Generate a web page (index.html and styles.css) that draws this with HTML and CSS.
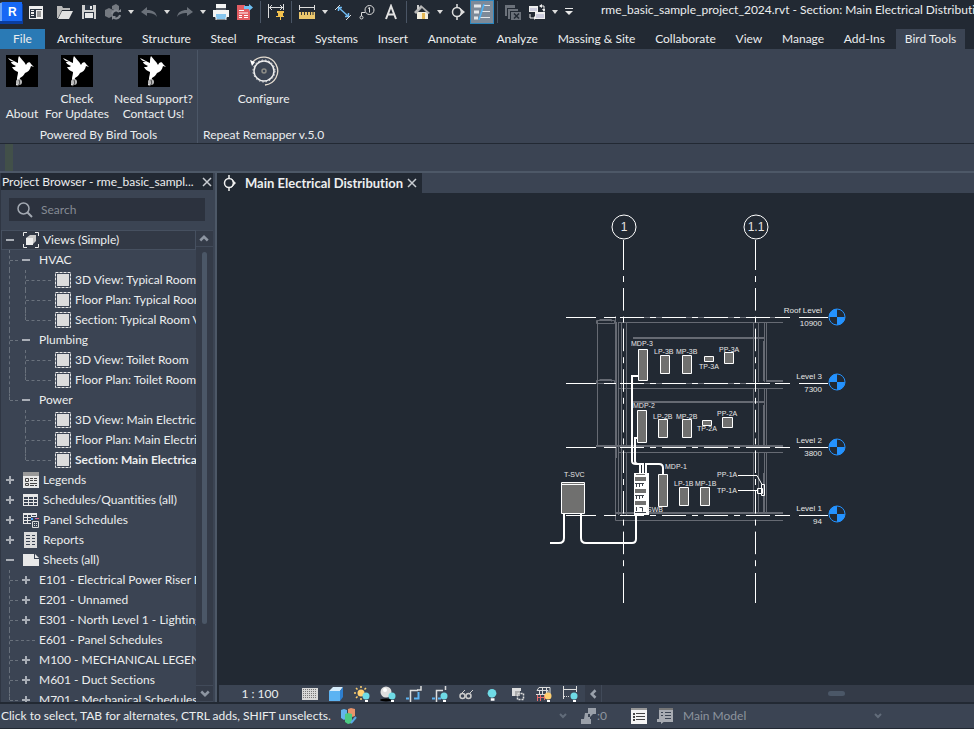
FILE: index.html
```html
<!DOCTYPE html>
<html lang="en">
<head>
<meta charset="utf-8">
<title>rme_basic_sample_project_2024.rvt - Section: Main Electrical Distribution</title>
<link rel="stylesheet" href="styles.css">
</head>
<body>
<svg class="defs" aria-hidden="true">
  <symbol id="caret" viewBox="0 0 6 4"><path d="M0 0h6L3 4z" fill="#dcdcdc"/></symbol>
  <symbol id="chev" viewBox="0 0 8 8"><path d="M1 2l3 3 3-3" fill="none" stroke="currentColor" stroke-width="2"/></symbol>
  <symbol id="bird" viewBox="0 0 32 32">
    <path d="M0 0h32v32H0z" fill="#000"/>
    <path d="M2 3c4 2 6 3 10 5 0-3 0-5 1-7 2 3 5 5 7 9 1-3 4-4 5-1l3 3-3-1c-1 4-3 6-6 7-1 2-3 4-5 5l-2 8-2-1 1-5c0-4 1-5 1-8-3-1-5-3-6-5 2 0 3 0 4-1-3-1-5-3-5-4l3 0C5 6 3 5 2 3z" fill="#fff"/>
    <circle cx="13" cy="27" r="3" fill="#bbb"/><path d="M11 31c3-1 3-3 2-6" stroke="#444" fill="none"/>
  </symbol>
  <symbol id="view" viewBox="0 0 16 16"><path d="M.5.5h15v15H.5z" fill="none" stroke="#e8e8e8" stroke-dasharray="3 1"/><path d="M2 2h12v12H2z" fill="#3b4453"/><path d="M2 2h12v12H2z" fill="#dcdcdc"/></symbol>
  <symbol id="minus" viewBox="0 0 8 8"><path d="M0 3h8v2H0z" fill="#a9aeb6"/></symbol>
  <symbol id="plus" viewBox="0 0 8 8"><path d="M0 3h8v2H0zM3 0h2v8H3z" fill="#a9aeb6"/></symbol>
  <symbol id="bulb" viewBox="0 0 8 10"><circle cx="4" cy="4" r="3.5"/><path d="M3 8h3v2H3z" fill="#fff"/></symbol>
  <symbol id="level" viewBox="-9 -9 18 18"><path d="M0 0v-8A8 8 0 0 0-8 0zM0 0v8A8 8 0 0 0 8 0z" fill="#2492ff"/><circle r="8" fill="none" stroke="#2492ff"/></symbol>
</svg>

<header class="titlebar">
  <div class="qat">
    <button class="qb logo" aria-label="Revit"><svg viewBox="0 0 24 24" width="24" height="24"><path d="M0 4h23v20H0z" fill="#0a3ea0"/><path d="M0 3l3-1v19H0z" fill="#6ca4f5"/><path d="M2 2h20v19H2z" fill="#1768f5"/><text x="8" y="16" class="logo-r">R</text></svg></button>
    <button class="qb" aria-label="Properties"><svg viewBox="0 0 16 16"><path d="M1 2h14v13H1z" fill="#eee"/><path d="M2 5h12v9H2z" fill="#2c3542"/><path d="M3 6h3v1H3zM3 8h3v2H3zM3 11h3v1H3zM8 6h6v8H8z" fill="#eee"/><path d="M9 8h4M9 10h4M9 12h4" stroke="#444"/></svg></button>
    <span class="spacer"></span>
    <button class="qb" aria-label="Open"><svg viewBox="0 0 16 16"><path d="M0 14V2h5l1 2h7v2H5L1 14z" fill="#b9b9b9"/><path d="M5 7h11l-4 8H1z" fill="#e2e2e2"/></svg></button>
    <button class="qb" aria-label="Save"><svg viewBox="0 0 16 16"><path d="M1 1h14v14H1z" fill="#d0d0d0"/><path d="M4 1h8v5H4zM3 8h10v7H3z" fill="#2c3542"/><path d="M9 2h2v3H9zM4 9h8v5H4z" fill="#e8e8e8"/></svg></button>
    <button class="qb" aria-label="Synchronize"><svg viewBox="0 0 16 16"><path d="M0 6l4-2 4 2v6l-4 2-4-2zM7 2l4-2 3 2v4l-3 1-4-2z" fill="#747980"/><path d="M7 10a4 4 0 0 1 7-2M15 11a4 4 0 0 1-7 2" stroke="#858a91" stroke-width="2" fill="none"/><path d="M12 8h4V5zM7 16v-4h4z" fill="#858a91"/></svg></button>
    <button class="qa" aria-label="Synchronize options"><svg><use href="#caret"/></svg></button>
    <button class="qb" aria-label="Undo"><svg viewBox="0 0 16 16"><path d="M0 8l6-5v3c6 0 9 2 10 7-2-3-5-4-10-4v3z" fill="#6b717a"/></svg></button>
    <button class="qa" aria-label="Undo list"><svg><use href="#caret"/></svg></button>
    <button class="qb" aria-label="Redo"><svg viewBox="0 0 16 16"><path d="M16 8l-6-5v3C4 6 1 8 0 13c2-3 5-4 10-4v3z" fill="#6b717a"/></svg></button>
    <button class="qa" aria-label="Redo list"><svg><use href="#caret"/></svg></button>
    <button class="qb" aria-label="Print"><svg viewBox="0 0 16 16"><path d="M3 0h10v5H3zM0 6h16v7H0z" fill="#f4f4f4"/><path d="M3 4h10v2H3z" fill="#555c66"/><path d="M3 10h10v5H3z" fill="#86c5ee"/><path d="M2 13h1v3h10v-3h1" fill="none" stroke="#eee"/></svg></button>
    <button class="qb" aria-label="Export PDF"><svg viewBox="0 0 16 16"><path d="M0 1h8v4h5v11H0z" fill="#e35d63"/><path d="M2 6.500h5M2 9h9M2 11.500h3M7 11.500h4M2 13.500h3M7 13.500h4" stroke="#fff"/><path d="M7 2h5V0l4 3.500L12 7V5H7z" fill="#6fc0f3"/></svg></button>
    <span class="qsep"></span>
    <button class="qb" aria-label="Aligned dimension"><svg viewBox="0 0 16 16"><path d="M.5 0v14M15.500 0v6M1 3.500h14M4 1L1.500 3.500 4 6M12 1l2.500 2.500L12 6" stroke="#ddd" fill="none"/><path d="M9 7h7v2h-1v3h2v1H8v-1h2V9H9zM12 13h1v3h-1z" fill="#f2c14e"/></svg></button>
    <span class="qsep"></span>
    <button class="qb" aria-label="Measure"><svg viewBox="0 0 16 16"><path d="M.5 1v5M15.500 1v5M1 3.500h14" stroke="#ddd"/><path d="M0 8h16v7H0z" fill="#eac66c"/><path d="M2.500 8v3M5.500 8v3M8.500 8v3M11.500 8v3M14 8v3" stroke="#3a3a3a"/></svg></button>
    <button class="qa" aria-label="Measure options"><svg><use href="#caret"/></svg></button>
    <button class="qb" aria-label="Dimension"><svg viewBox="0 0 16 16"><path d="M3 3l11 10M3.500 7V3.500H7M10 12.500h3.500V9" stroke="#6fb9f0" stroke-width="1.500" fill="none"/><path d="M0 6l5-5M11 16l5-5" stroke="#ddd"/></svg></button>
    <button class="qb" aria-label="Tag"><svg viewBox="0 0 16 16"><circle cx="10.500" cy="6" r="4.500" fill="none" stroke="#ddd"/><path d="M10.500 3.500v5M9 4.500l1.500-1M6 8.500H2.500V12" stroke="#ddd" fill="none"/><circle cx="2.500" cy="13.500" r="1.500" fill="none" stroke="#ddd"/></svg></button>
    <button class="qb" aria-label="Text"><svg viewBox="0 0 16 16"><path d="M3 15L8 2l5 13M4.500 10.500h7" stroke="#e2e2e2" stroke-width="2" fill="none"/></svg></button>
    <span class="qsep"></span>
    <button class="qb" aria-label="Default 3D view"><svg viewBox="0 0 16 16"><path d="M3 8h11v7H3z" fill="#f3efe0"/><path d="M0 8l7-7 9 8-2 1-6-6-6 6z" fill="#b5b5b5"/><path d="M3 1h2v4H3z" fill="#ccc"/><path d="M8 9h3v6H8z" fill="#e5b856"/></svg></button>
    <button class="qa" aria-label="3D view options"><svg><use href="#caret"/></svg></button>
    <button class="qb" aria-label="Section"><svg viewBox="0 0 16 16"><circle cx="7" cy="8" r="4.500" fill="none" stroke="#ddd" stroke-width="1.500"/><path d="M7 0v3M7 13v3" stroke="#ddd" stroke-width="1.500"/><path d="M9 3l6 5-6 5 2-5z" fill="#ddd"/></svg></button>
    <button class="qb on" aria-label="Thin lines" aria-pressed="true"><svg viewBox="0 0 16 16"><path d="M0 2h7M0 8h5M0 14h4" stroke="#e3e6e9" stroke-width="3"/><path d="M9 1.500h7M8 7.500h8M6 13.500h10" stroke="#e3e6e9"/><path d="M10 0L5 16" stroke="#4db3f5" stroke-width="1.500"/></svg></button>
    <span class="qsep"></span>
    <button class="qb" aria-label="Close inactive views"><svg viewBox="0 0 16 16"><path d="M0 1h10v3H2v8H0zM3 5h10v2H5v8H3z" fill="#6b717a"/><path d="M6 8h10v8H6z" fill="#6b717a"/><path d="M9 9.500l5 5M14 9.500l-5 5" stroke="#222933" stroke-width="1.500"/></svg></button>
    <button class="qb" aria-label="Switch windows"><svg viewBox="0 0 16 16"><path d="M0 2h9v6H0zM6 8h10v7H6z" fill="#eee"/><path d="M1 4h7v3H1zM7 10h8v4H7z" fill="#ccd"/><path d="M11 2h4v4M1 10v4h4" fill="none" stroke="#eee"/><path d="M10 2l3-2v4zM13 5h4l-2 3zM5 12v4l2-2z" fill="#eee"/></svg></button>
    <button class="qa" aria-label="Window list"><svg><use href="#caret"/></svg></button>
    <button class="qa wide" aria-label="Customize toolbar"><svg viewBox="0 0 8 8"><path d="M0 0h8v1H0zM0 3h8L4 7z" fill="#e8e8e8"/></svg></button>
  </div>
  <h1 class="doc-title">rme_basic_sample_project_2024.rvt - Section: Main Electrical Distribution</h1>
</header>

<nav class="tabs">
  <button class="file">File</button>
  <div class="tablist">
    <button>Architecture</button><button>Structure</button><button>Steel</button><button>Precast</button><button>Systems</button><button>Insert</button><button>Annotate</button><button>Analyze</button><button>Massing &amp; Site</button><button>Collaborate</button><button>View</button><button>Manage</button><button>Add-Ins</button>
  </div>
  <button class="active">Bird Tools</button>
</nav>

<section class="ribbon">
  <div class="panel">
    <div class="bird-cmds">
      <button><svg><use href="#bird"/></svg><span>About</span></button>
      <button><svg><use href="#bird"/></svg><span>Check<br>For Updates</span></button>
      <button><svg><use href="#bird"/></svg><span>Need Support?<br>Contact Us!</span></button>
    </div>
    <h2>Powered By Bird Tools</h2>
  </div>
  <div class="panel">
    <div class="cmds">
      <button><svg viewBox="0 0 32 32"><circle cx="16" cy="16" r="10" fill="none" stroke="#eee" stroke-width="1.500"/><circle cx="16" cy="16" r="11" fill="none" stroke="#eee" stroke-dasharray="1.500 2"/><path d="M5 7A14 14 0 1 1 17 30" fill="none" stroke="#e6ded2" stroke-width="1.300"/><path d="M2 5l5 2-3 4z" fill="#fff"/><circle cx="16" cy="16" r="2" fill="none" stroke="#8d8d88" stroke-width="1.500"/></svg><span>Configure<br>&nbsp;</span></button>
    </div>
    <h2>Repeat Remapper v.5.0</h2>
  </div>
</section>
<div class="options"><i></i></div>

<main class="work">
  <aside class="browser">
    <div class="b-head"><h2>Project Browser - rme_basic_sampl...</h2><button aria-label="Close browser"><svg viewBox="0 0 10 10"><path d="M1 1l8 8M9 1L1 9" stroke="#c9cdd2" stroke-width="1.500"/></svg></button></div>
    <label class="search"><svg viewBox="0 0 16 16"><circle cx="6.500" cy="6.500" r="5.500" fill="none" stroke="#a3a9b2" stroke-width="1.500"/><path d="M10.500 10.500L15 15" stroke="#a3a9b2" stroke-width="2"/></svg><input type="text" placeholder="Search" aria-label="Search"></label>
    <div class="tree-box">
      <ul class="tree">
        <li class="l1 sel"><svg class="tg"><use href="#minus"/></svg><svg class="ic" viewBox="0 0 16 16"><path d="M.5 4V.5H4M12 .5h3.500V4M15.500 12v3.500H12M4 15.500H.5V12" fill="none" stroke="#e8e8e8"/><path d="M3 6l4-3h6v6l-4 4H3z" fill="#c9c9c9"/><path d="M3 6h7v7H3z" fill="#eee"/></svg>Views (Simple)</li>
        <li class="l2"><i class="stem"></i><svg class="tg"><use href="#minus"/></svg>HVAC</li>
        <li class="l3"><i class="pass"></i><i class="stem"></i><svg class="ic"><use href="#view"/></svg>3D View: Typical Room</li>
        <li class="l3"><i class="pass"></i><i class="stem"></i><svg class="ic"><use href="#view"/></svg>Floor Plan: Typical Room</li>
        <li class="l3"><i class="pass"></i><i class="stem end"></i><svg class="ic"><use href="#view"/></svg>Section: Typical Room View</li>
        <li class="l2"><i class="stem"></i><svg class="tg"><use href="#minus"/></svg>Plumbing</li>
        <li class="l3"><i class="pass"></i><i class="stem"></i><svg class="ic"><use href="#view"/></svg>3D View: Toilet Room</li>
        <li class="l3"><i class="pass"></i><i class="stem end"></i><svg class="ic"><use href="#view"/></svg>Floor Plan: Toilet Room</li>
        <li class="l2"><i class="stem end"></i><svg class="tg"><use href="#minus"/></svg>Power</li>
        <li class="l3"><i class="none"></i><i class="stem"></i><svg class="ic"><use href="#view"/></svg>3D View: Main Electrical</li>
        <li class="l3"><i class="none"></i><i class="stem"></i><svg class="ic"><use href="#view"/></svg>Floor Plan: Main Electrical</li>
        <li class="l3 current"><i class="none"></i><i class="stem end"></i><svg class="ic"><use href="#view"/></svg>Section: Main Electrical</li>
        <li class="l1"><svg class="tg"><use href="#plus"/></svg><svg class="ic" viewBox="0 0 16 16"><path d="M0 0h16v16H0z" fill="#e8e8e8"/><path d="M0 0h16v4H0z" fill="#999"/><path d="M2.500 6.500h3v3h-3zM2.500 11.500h3v2h-3z" fill="none" stroke="#444"/><path d="M7 6.500h3M11 6.500h3M7 8.500h3M11 8.500h3M7 11.500h7M7 13.500h4M12 13.500h2" stroke="#444"/></svg>Legends</li>
        <li class="l1"><svg class="tg"><use href="#plus"/></svg><svg class="ic" viewBox="0 0 16 16"><path d="M0 2h15v12H0z" fill="#e8e8e8"/><path d="M1 5h4v2H1zM6 5h4v2H6zM11 5h3v2h-3zM1 8h4v2H1zM6 8h4v2H6zM11 8h3v2h-3zM1 11h4v2H1zM6 11h4v2H6zM11 11h3v2h-3z" fill="#3b4453"/></svg>Schedules/Quantities (all)</li>
        <li class="l1"><svg class="tg"><use href="#plus"/></svg><svg class="ic" viewBox="0 0 16 16"><path d="M0 1h14v4H8v7H0z" fill="#e8e8e8"/><path d="M1 3h3v2H1zM5 3h3v2H5zM9 3h4v1H9zM1 6h3v2H1zM5 6h3v2H5zM1 9h3v2H1zM5 9h3v2H5z" fill="#3b4453"/><path d="M8 6h2v2H8z" fill="#4ba3ff"/><path d="M12 6h2v1h-2z" fill="#c06bd0"/><path d="M14 6h2v1h-2z" fill="#f06a6a"/><path d="M9.500 9.500h6v6h-6z" fill="none" stroke="#ddd"/><path d="M11 11h1v1h-1zM13 11h1v1h-1zM11 13h1v1h-1zM13 13h1v1h-1z" fill="#ddd"/></svg>Panel Schedules</li>
        <li class="l1"><svg class="tg"><use href="#plus"/></svg><svg class="ic" viewBox="0 0 16 16"><path d="M1 0h13v16H1z" fill="#dcdcdc"/><path d="M3 3.500h4M9 3.500h3M3 6.500h4M9 6.500h3M3 9.500h4M9 9.500h3M3 12.500h4M9 12.500h3" stroke="#3b4453"/></svg>Reports</li>
        <li class="l1"><svg class="tg"><use href="#minus"/></svg><svg class="ic" viewBox="0 0 16 16"><path d="M0 2h11v5h5v7H0zM12 2l4 4h-4z" fill="#e8e8e8"/></svg>Sheets (all)</li>
        <li class="l2"><i class="stem"></i><svg class="tg"><use href="#plus"/></svg>E101 - Electrical Power Riser Diagram</li>
        <li class="l2"><i class="stem"></i><svg class="tg"><use href="#plus"/></svg>E201 - Unnamed</li>
        <li class="l2"><i class="stem"></i><svg class="tg"><use href="#plus"/></svg>E301 - North Level 1 - Lighting</li>
        <li class="l2 leaf"><i class="stem"></i>E601 - Panel Schedules</li>
        <li class="l2"><i class="stem"></i><svg class="tg"><use href="#plus"/></svg>M100 - MECHANICAL LEGEND</li>
        <li class="l2"><i class="stem"></i><svg class="tg"><use href="#plus"/></svg>M601 - Duct Sections</li>
        <li class="l2"><i class="stem end"></i><svg class="tg"><use href="#plus"/></svg>M701 - Mechanical Schedules</li>
      </ul>
      <div class="vscroll"><button class="up" aria-label="Scroll up"><svg><use href="#chev"/></svg></button><i></i><button aria-label="Scroll down"><svg><use href="#chev"/></svg></button></div>
    </div>
  </aside>

  <section class="views">
    <div class="view-tabs">
      <div class="view-tab"><svg class="vt" viewBox="0 0 16 16"><circle cx="7" cy="8" r="4.500" fill="none" stroke="#eee" stroke-width="1.500"/><path d="M7 0v3M7 13v3" stroke="#eee" stroke-width="1.500"/><path d="M9 3l5 5-5 5 2-5z" fill="#eee"/></svg><h2>Main Electrical Distribution</h2><button aria-label="Close view"><svg viewBox="0 0 10 10"><path d="M1 1l8 8M9 1L1 9" stroke="#c9cdd2" stroke-width="1.500"/></svg></button></div>
    </div>
    <svg class="drawing" viewBox="217 193 757 492" role="img" aria-label="Main electrical distribution section">
      <g class="grey">
        <path d="M597.500 320V446M596.500 320.500h18v3h-18zM599.500 319.500h12v2M596.500 380.500h18v3h-18zM599.500 379.500h12v2M618.500 322V515M621.500 323V515M626.500 323V445M626.500 453V515"/>
        <path d="M615.500 316V389M615.500 445V520.500H783M618 322.500H783M618 388.500H783M618 452.500H783"/>
        <path d="M753.500 323V382M758.500 323V382M753.500 389V445M758.500 389V445M753.500 453V512M758.500 453V512M764.500 323V382M766.500 323V382M764.500 389V446M766.500 389V446M764.500 453V512M766.500 453V512M763.500 341V381M763.500 405V445M763.500 473V512"/>
        <path class="thick" d="M616 322V458M633 338H764M632 402H765M766 381H783M596 446H783M616 513H783"/>
        <path d="M620 317.500H783M620 383.500H766"/>
      </g>
      <g class="line">
        <path d="M623.500 240v30m0 6v6M755.500 240v30m0 6v6M623.500 573v30M755.500 573v30"/>
        <path class="axis" d="M623.500 288V568M755.500 288V568"/>
        <path d="M566 317.500h30m8 0h12M566 383.500h30m8 0h12M566 447.500h30m8 0h12M566 515.500h30m8 0h12M775 317.500h15M775 383.500h15M775 447.500h15M775 515.500h15M799 317.500h29M799 383.500h29M799 447.500h29M799 515.500h29"/>
        <path class="dash" d="M620 317.500H775M620 383.500H775M620 447.500H775M620 515.500H775"/>
        <circle cx="624" cy="227" r="12"/><circle cx="756" cy="227" r="12"/>
        <path d="M738 475.500h19l5 9M738 490.500h19M757.500 488.500h5v5h-5zM761.500 484.500h3v11h-3z"/>
      </g>
      <g class="wire">
        <path d="M638 376h-6V461q0 3 4 3h4v9M638 438h-3v23q0 3 4 3h4v9M646 473v-9h13q4 0 4 4v6M564 514v24q0 5-5 5h-9M581 514v24q0 5 5 5h46q4 0 4-4V515"/>
      </g>
      <g class="box">
        <path d="M638.500 349.500h9v31h-9zM660.500 355.500h9v18h-9zM682.500 355.500h9v18h-9zM704.500 356.500h9v5h-9zM724.500 352.500h9v11h-9z"/>
        <path d="M637.500 410.500h9v32h-9zM658.500 419.500h9v18h-9zM682.500 419.500h9v18h-9zM702.500 420.500h9v5h-9zM722.500 417.500h10v10h-10z"/>
        <path d="M658.500 474.500h9v32h-9zM679.500 487.500h9v18h-9zM700.500 487.500h9v18h-9zM561.500 482.500h23v31h-23zM561 484.500h24"/>
      </g>
      <path d="M634 473h15v42h-15z" fill="#fff"/>
      <path d="M635 477h11v4h-11zM635 489h11v4h-11zM635 501h11v4h-11zM636 474h9v1h-9z" fill="#70706f"/>
      <path d="M635 483.500h9M636.500 483v4M639.500 483v4M642.500 483v3M635 495.500h9M636.500 495v4M639.500 495v4M642.500 495v3M636.500 507v4M639.500 507.500h3v4M635 512.500h11" stroke="#3c424b" fill="none"/>
      <g class="heads"><use href="#level" x="828" y="308" width="18" height="18"/><use href="#level" x="828" y="373" width="18" height="18"/><use href="#level" x="828" y="438" width="18" height="18"/><use href="#level" x="828" y="505" width="18" height="18"/></g>
      <g class="bubble"><text x="624" y="231">1</text><text x="756" y="231">1.1</text></g>
      <g class="lvl">
        <text x="822" y="313">Roof Level</text><text x="822" y="326">10900</text>
        <text x="822" y="379">Level 3</text><text x="822" y="392">7300</text>
        <text x="822" y="443">Level 2</text><text x="822" y="456">3800</text>
        <text x="822" y="511">Level 1</text><text x="822" y="524">94</text>
      </g>
      <g class="tag">
        <text x="631" y="346">MDP-3</text><text x="654" y="354">LP-3B</text><text x="676" y="354">MP-3B</text><text x="699" y="369">TP-3A</text><text x="719" y="352">PP-3A</text>
        <text x="633" y="408">MDP-2</text><text x="653" y="419">LP-2B</text><text x="676" y="419">MP-2B</text><text x="697" y="431">TP-2A</text><text x="717" y="416">PP-2A</text>
        <text x="665" y="469">MDP-1</text><text x="674" y="486">LP-1B</text><text x="695" y="486">MP-1B</text><text x="717" y="477">PP-1A</text><text x="717" y="493">TP-1A</text>
        <text x="564" y="477">T-SVC</text><text x="647" y="512">SWB</text>
      </g>
    </svg>
    <div class="viewbar">
      <div class="vb-tools">
        <button class="scale">1 : 100</button>
        <button aria-label="Detail level"><svg viewBox="0 0 16 16"><path d="M0 2h16v12H0z" fill="#d8d8d8"/><path d="M1 3.500h14M1 5.500h14M1 7.500h14M1 9.500h14M1 11.500h14" stroke="#777" stroke-dasharray="1 1"/></svg></button>
        <button aria-label="Visual style"><svg viewBox="0 0 16 16"><path d="M1 5l4-4h10l-3 4z" fill="#d6ecfb"/><path d="M1 5h11v10H1z" fill="#5cb3f2"/><path d="M12 5l3-4v10l-3 4z" fill="#2d7fd0"/></svg></button>
        <button aria-label="Sun path"><svg viewBox="0 0 16 16"><circle cx="7" cy="7" r="3.500" fill="#ffcf70"/><path d="M7 0v2M7 12v2M0 7h2M2 2l1.500 1.500M12 2l-1.500 1.500M2 12l1.500-1.500" stroke="#ffcf70" stroke-width="1.500"/><use href="#bulb" x="8" y="6" width="8" height="10" fill="#6fdbe6"/></svg></button>
        <button aria-label="Shadows"><svg viewBox="0 0 16 16"><ellipse cx="6" cy="14" rx="6" ry="1.500" fill="#000"/><circle cx="6" cy="6" r="5.500" fill="#dedede"/><circle cx="5" cy="4" r="2" fill="#fff"/><use href="#bulb" x="8" y="6" width="8" height="10" fill="#6fdbe6"/></svg></button>
        <button aria-label="Crop view"><svg viewBox="0 0 16 16"><path d="M4.500 16V4.500H12" fill="none" stroke="#ddd" stroke-width="1.500"/><path d="M15 0v4h-4" fill="none" stroke="#ddd" stroke-width="1.500"/><path d="M12.500 6v6.500H8M0 12.500h3" fill="none" stroke="#5cb3f2" stroke-width="2"/></svg></button>
        <button aria-label="Show crop region"><svg viewBox="0 0 16 16"><path d="M4.500 16V4.500H11M13.500 0v4" fill="none" stroke="#ddd" stroke-width="1.500"/><path d="M0 12.500h3M6 12.500h3" stroke="#5cb3f2" stroke-width="2"/><use href="#bulb" x="8" y="6" width="8" height="10" fill="#6fdbe6"/></svg></button>
        <button aria-label="Temporary hide"><svg viewBox="0 0 16 16"><circle cx="4.500" cy="10" r="2.500" fill="none" stroke="#ccc" stroke-width="1.500"/><circle cx="10.500" cy="10" r="2.500" fill="none" stroke="#ccc" stroke-width="1.500"/><path d="M2 9l5-5M11 8l4-4" stroke="#ccc"/></svg></button>
        <button aria-label="Reveal hidden"><svg viewBox="0 0 16 16"><use href="#bulb" x="3" y="2" width="10" height="13" fill="#6fdbe6"/></svg></button>
        <button aria-label="Temporary properties"><svg viewBox="0 0 16 16"><path d="M2 2h9v3H7v5H2z" fill="#ddd"/><path d="M5 5h5v5H5z" fill="#aaa"/><path d="M7.500 7.500h6v6h-6z" fill="none" stroke="#ddd" stroke-width="1.500" stroke-dasharray="2 1"/></svg></button>
        <button aria-label="Analytical model"><svg viewBox="0 0 16 16"><path d="M3 1.500h11v7M1 4.500l2-3M1 4.500h11v4M3.500 4v5M6.500 2v7M10.500 2v7M0 8.500h13" fill="none" stroke="#ddd"/><path d="M1.500 9v6M4.500 9v6M8.500 9v5M1 11.500h9" stroke="#e86a6a" fill="none"/><use href="#bulb" x="8" y="6" width="8" height="10" fill="#ffcf70"/></svg></button>
        <button aria-label="Reveal constraints"><svg viewBox="0 0 16 16"><path d="M1.500 0v13M14.500 0v6M2 3.500h12" fill="none" stroke="#ddd"/><path d="M2 10.500h6" stroke="#ddd" stroke-dasharray="1 1"/><use href="#bulb" x="8" y="6" width="8" height="10" fill="#6fdbe6"/></svg></button>
      </div>
      <div class="hscroll"><button class="left" aria-label="Scroll left"><svg><use href="#chev"/></svg></button><span><i></i></span></div>
    </div>
  </section>
</main>

<footer class="status">
  <p class="hint">Click to select, TAB for alternates, CTRL adds, SHIFT unselects.<svg viewBox="0 0 16 16"><path d="M0 2l3-1 3 1v8l-3 2-3-2z" fill="#63b5ec"/><path d="M7 1l3-1 4 1v7l-3 1-4-1z" fill="#e8946a"/><path d="M4 6l3-1 4 1v9l-4 1-3-2z" fill="#4ccb83"/><path d="M10 15l5-6" stroke="#5aa9e6" stroke-width="2"/></svg></p>
  <div class="st-right">
    <svg class="dim"><use href="#chev"/></svg>
    <svg class="si" viewBox="0 0 16 16"><path d="M7 0h8v6h-3l-3 3V6H7zM4 5h3v4h2v2h1v5H0v-5h3z" fill="#9aa0a9"/></svg><span class="count">:0</span>
    <button aria-label="Worksets"><svg viewBox="0 0 16 16"><path d="M0 0h16v16H0z" fill="#f4f4f4"/><path d="M0 0h16v2H0z" fill="#999"/><path d="M2 5h2v2H2zM2 8h2v2H2zM2 11h2v2H2zM5 5h9v1H5zM5 8h9v1H5zM5 11h9v1H5z" fill="#444"/></svg></button>
    <button aria-label="Design options"><svg viewBox="0 0 16 16"><path d="M2 0h14v14H2z" fill="#a7abb2"/><path d="M2 0h14v2H2z" fill="#777"/><path d="M4 4.500h2M8 4.500h6M4 7.500h2M8 7.500h6M8 10.500h6" stroke="#3b4453"/><path d="M0 11h4V9l4 4-4 3v-2H0z" fill="#a7abb2"/></svg></button>
    <label class="model"><select aria-label="Active design option"><option>Main Model</option></select><svg class="dim"><use href="#chev"/></svg></label>
  </div>
</footer>
</body>
</html>
```
FILE: styles.css
```css
* { box-sizing: border-box; }
html, body { height: 100%; }
body {
  margin: 0;
  display: flex;
  flex-direction: column;
  background: #222933;
  color: #eceeef;
  font: 12px/16px Lato, "Open Sans", sans-serif;
  font-variant-ligatures: none;
  overflow: hidden;
  cursor: default;
}
h1, h2, p, ul { margin: 0; padding: 0; font: inherit; list-style: none; }
button, input, select { font: inherit; color: inherit; background: none; border: 0; padding: 0; margin: 0; }
svg { display: block; flex: none; }
i { display: block; }
.defs { position: absolute; width: 0; height: 0; }

/* Title bar */
.titlebar { display: flex; height: 29px; flex: none; white-space: nowrap; }
.qat { display: flex; width: 601px; height: 24px; flex: none; }
.qb { width: 24px; height: 24px; display: grid; place-items: center; }
.qb svg { width: 16px; height: 16px; }
.qb.logo svg { width: 24px; height: 24px; }
.logo-r { font: bold 12px "Liberation Sans", sans-serif; fill: #fff; }
.qb.on { background: #7d8a99; border: 1px solid #2a86bf; }
.qa { width: 12px; height: 24px; display: grid; place-items: center; }
.qa svg { width: 6px; height: 4px; }
.qa.wide { width: 16px; }
.qa.wide svg { width: 8px; height: 8px; }
.spacer { width: 5px; }
.qsep { width: 1px; height: 22px; margin: 1px 3px; background: #4a5565; }
.doc-title { flex: 1; min-width: 0; overflow: hidden; line-height: 20px; }

/* Ribbon tabs */
.tabs { display: flex; height: 20px; flex: none; white-space: nowrap; padding-right: 9px; }
.file { width: 45px; background: #2a7ab5; }
.tablist { flex: 1; display: flex; justify-content: space-between; padding: 0 11px 0 12px; }
.tabs .active { width: 69px; background: #3b4453; }

/* Ribbon */
.ribbon { display: flex; height: 95px; flex: none; background: #3b4453; padding-top: 1px; border-bottom: 1px solid #222933; }
.panel { display: flex; flex-direction: column; justify-content: space-between; height: 93px; border-right: 1px solid #4b5666; text-align: center; }
.panel:last-child { border: 0; padding-left: 5px; }
.bird-cmds { display: grid; grid-template-columns: 44px 66px 87px; }
.cmds { display: grid; justify-content: center; }
.ribbon button { display: flex; flex-direction: column; align-items: center; justify-content: space-between; height: 71px; padding-top: 5px; line-height: 15px; white-space: nowrap; }
.ribbon button svg { width: 32px; height: 32px; }
.options { height: 29px; flex: none; background: #3b4453; border-bottom: 2px solid #4d5867; padding-left: 5px; }
.options i { width: 8px; height: 27px; background: #425049; }

/* Work area */
.work { display: flex; flex: 1; min-height: 0; }
.browser { width: 217px; flex: none; display: flex; flex-direction: column; background: #3b4453; border-right: 2px solid #4d5867; border-left: 1px solid #2f3643; padding-right: 2px; margin-bottom: 2px; }
.b-head { display: flex; align-items: center; justify-content: space-between; height: 17px; background: #222933; padding: 0 1px; white-space: nowrap; flex: none; }
.b-head svg, .view-tab button svg { width: 10px; height: 10px; }
.search { display: flex; align-items: center; gap: 8px; height: 23px; margin: 8px 8px 9px; padding-left: 8px; background: #2c323e; flex: none; }
.search svg { width: 16px; height: 16px; }
.search input { flex: 1; min-width: 0; outline: 0; }
.search input::placeholder { color: #858b94; opacity: 1; }
.tree-box { display: flex; flex: 1; min-height: 0; }
.tree { flex: 1; min-width: 0; overflow: hidden; }
.tree li { display: flex; align-items: center; height: 20px; white-space: nowrap; }
.tree .sel { background: #323946; outline: 1px solid #465060; outline-offset: -1px; }
.tg { width: 8px; height: 8px; }
.ic { width: 16px; height: 16px; margin-right: 4px; }
.l1 { padding-left: 5px; }
.l1 .tg { margin-right: 9px; }
.l2, .l3 { padding-left: 8px; }
.l2 .tg { margin: 0 9px 0 4px; }
.stem, .pass { align-self: stretch; border-left: 1px dashed #69717c; flex: none; }
.stem { width: 9px; }
.stem::before { content: ""; display: block; height: 10px; border-bottom: 1px dashed #69717c; }
.tree .end { height: 10px; align-self: flex-start; }
.pass, .none { width: 16px; flex: none; }
.l3 .stem { width: 26px; margin-right: 4px; }
.leaf .stem { width: 26px; margin-right: 4px; }
.current { font-weight: bold; }
.vscroll { width: 17px; flex: none; display: flex; flex-direction: column; align-items: center; background: #343b48; color: #8d95a1; }
.vscroll button { width: 17px; height: 17px; display: grid; place-items: center; border: 1px solid #414a59; border-width: 1px 0; }
.vscroll svg { width: 10px; height: 10px; }
.vscroll .up { transform: rotate(180deg); }
.vscroll i { width: 5px; flex: 0 1 372px; margin: 5px 0 auto; border-radius: 3px; background: #4b5767; }

/* Views */
.views { flex: 1; min-width: 0; display: flex; flex-direction: column; margin-bottom: 2px; }
.view-tabs { display: flex; height: 20px; flex: none; background: #3b4453; }
.view-tab { display: flex; align-items: center; width: 205px; padding: 0 5px; background: #222933; font-size: 13px; font-weight: bold; white-space: nowrap; }
.view-tab .vt { width: 16px; height: 16px; margin-right: 7px; }
.view-tab h2 { flex: 1; }
.drawing { flex: 1; min-height: 0; width: 100%; }
.drawing .grey { stroke: #666a73; fill: none; }
.drawing .thick { stroke-width: 2; }
.drawing .line { stroke: #fff; fill: none; }
.drawing .axis { stroke-dasharray: 22.6 6 6 6; }
.drawing .dash { stroke-dasharray: 24 6 6 6; }
.drawing .wire { stroke: #fff; stroke-width: 2; fill: none; }
.drawing .box { stroke: #fff; fill: #70706f; }
.drawing text { font-family: "Liberation Sans", sans-serif; fill: #e6e6e6; }
.bubble text { font-size: 12px; text-anchor: middle; }
.lvl text { font-size: 8px; text-anchor: end; }
.tag text { font-size: 7px; }
.viewbar { display: flex; height: 17px; flex: none; margin-left: 2px; background: #343b48; }
.vb-tools { display: flex; background: #3b4453; padding-right: 2px; }
.vb-tools button { width: 26px; display: grid; place-items: center; }
.vb-tools .scale { width: 78px; padding-left: 4px; }
.vb-tools svg { width: 16px; height: 16px; }
.hscroll { flex: 1; display: flex; align-items: center; color: #9aa1ab; }
.hscroll .left { width: 17px; height: 17px; display: grid; place-items: center; border-right: 1px solid #414a59; }
.hscroll svg { width: 10px; height: 10px; transform: rotate(90deg); }
.hscroll span { flex: 1; display: flex; padding-left: 58%; }
.hscroll i { width: 17px; height: 5px; border-radius: 3px; background: #4b5767; }

/* Status bar */
.status { display: flex; align-items: center; height: 25px; flex: none; background: #3b4453; border-bottom: 1px solid #222933; white-space: nowrap; color: #8d949e; }
.hint { display: flex; align-items: center; flex: none; justify-content: space-between; width: 357px; padding-left: 1px; color: #eceeef; }
.hint svg { width: 16px; height: 16px; }
.st-right { display: flex; align-items: center; flex: 1; padding-left: 202px; }
.dim { width: 8px; height: 8px; color: #626c7a; }
.si { margin-left: 14px; }
.count { width: 34px; }
.st-right button { width: 26px; }
.st-right button svg, .si { width: 16px; height: 16px; }
.model { display: flex; align-items: center; }
.model select { appearance: none; width: 191px; outline: 0; }
```
